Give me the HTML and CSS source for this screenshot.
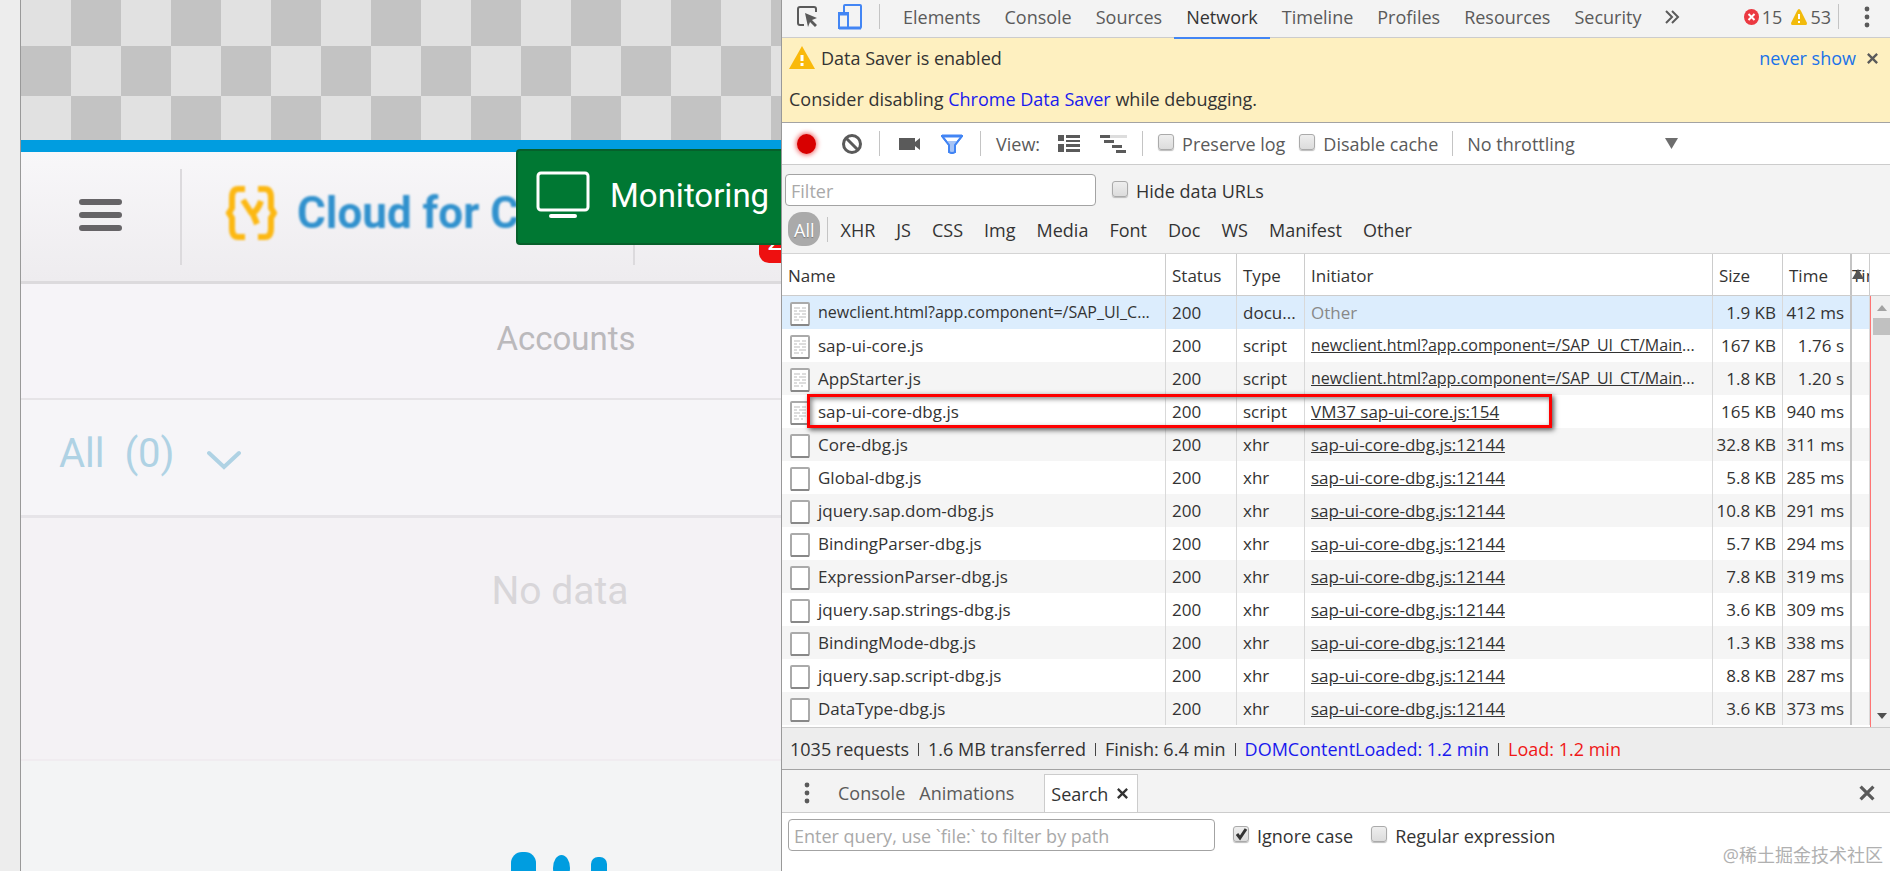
FILE: index.html
```html
<!DOCTYPE html>
<html lang="en">
<head>
    <meta charset="UTF-8">
    <meta name="viewport" content="width=device-width, initial-scale=1.0">
    <title>Cloud for Customer - Network</title>
    <link rel="stylesheet" href="styles.css">
</head>
<body>
    <svg class="sprite" aria-hidden="true">
        <symbol id="file-text" viewBox="0 0 20 24">
            <rect x="1" y="1" width="18" height="22" rx="1" fill="#fff" stroke="#aaa" stroke-width="2"/>
            <path d="M1 23h18" stroke="#888" stroke-width="2"/>
            <path d="M4 6h6m2 0h4M4 9h3m2 0h7M4 12h6m2 0h4M4 15h3m2 0h7M4 18h5m2 0h2" stroke="#ddd" stroke-width="2"/>
        </symbol>
        <symbol id="file-blank" viewBox="0 0 20 24">
            <rect x="1" y="1" width="18" height="22" rx="1" fill="#fff" stroke="#aaa" stroke-width="2"/>
            <path d="M1 23h18" stroke="#888" stroke-width="2"/>
        </symbol>
        <symbol id="cross" viewBox="0 0 14 14">
            <path d="M2 2l10 10M12 2L2 12" stroke="currentColor" stroke-width="2.500"/>
        </symbol>
        <symbol id="dots" viewBox="0 0 6 22">
            <circle cx="3" cy="3" r="2.4" fill="currentColor"/>
            <circle cx="3" cy="11" r="2.4" fill="currentColor"/>
            <circle cx="3" cy="19" r="2.4" fill="currentColor"/>
        </symbol>
    </svg>

    <div class="container">
        <!-- Device preview -->
        <div class="preview">
            <div class="device">
                <div class="checker"></div>
                <header class="app-header">
                    <button class="menu-btn" aria-label="Menu"><span></span><span></span><span></span></button>
                    <div class="app-sep"></div>
                    <svg class="logo" width="52" height="54" viewBox="0 0 52 54" fill="none" stroke="#fcb813">
                        <path d="M20 3h-7Q7 3 7 12v10l-3 5 3 5v10q0 9 6 9h7M33 3h7q6 0 6 9v10l3 5-3 5v10q0 9-6 9h-7" stroke-width="6"/>
                        <path d="M18 14l9 14M36 15q-3 9-9 13M27 26l5 12" stroke-width="6"/>
                    </svg>
                    <span class="app-title">Cloud for C</span>
                    <div class="app-sep second"></div>
                    <span class="badge">2</span>
                    <div class="monitoring">
                        <svg width="54" height="48" viewBox="0 0 54 48" fill="none" stroke="#fff">
                            <rect x="2" y="2" width="50" height="37" rx="3" stroke-width="3"/>
                            <path d="M15 45h24" stroke-width="4" stroke-linecap="round"/>
                        </svg>
                        <span>Monitoring</span>
                    </div>
                </header>
                <div class="accounts">Accounts</div>
                <button class="filter-all">
                    <span>All&nbsp; (0)</span>
                    <svg width="34" height="20" viewBox="0 0 34 20" fill="none" stroke="currentColor" stroke-width="4" stroke-linecap="round">
                        <path d="M2 3l15 14L32 3"/>
                    </svg>
                </button>
                <div class="no-data">No data</div>
                <div class="loading">
                    <i class="dot big"></i><i class="dot mid"></i><i class="dot"></i>
                </div>
            </div>
        </div>

        <!-- DevTools -->
        <div class="devtools">
            <nav class="tabs">
                <button class="icon-btn inspect" aria-label="Inspect">
                    <svg width="22" height="22" viewBox="0 0 22 22">
                        <path d="M7 19H3q-2 0-2-2V3q0-2 2-2h14q2 0 2 2v3" fill="none" stroke="#5a5a5a" stroke-width="2"/>
                        <path d="M8 7l12 5-5 2 5 5-2 2-5-5-2 5z" fill="#5a5a5a"/>
                    </svg>
                </button>
                <button class="icon-btn device-btn" aria-label="Toggle device toolbar">
                    <svg width="24" height="26" viewBox="0 0 24 26" fill="#f3f3f3" stroke="#4285f4" stroke-width="2">
                        <rect x="6" y="1" width="17" height="23" rx="1"/>
                        <path d="M1 9h9v15H1z"/>
                        <path d="M1 10h9" stroke-width="3"/>
                        <path d="M1 24h22" stroke-width="3"/>
                    </svg>
                </button>
                <div class="sep"></div>
                <div class="tab-list">
                    <button>Elements</button>
                    <button>Console</button>
                    <button>Sources</button>
                    <button class="active">Network</button>
                    <button>Timeline</button>
                    <button>Profiles</button>
                    <button>Resources</button>
                    <button>Security</button>
                    <button class="more" aria-label="More tabs">
                        <svg width="15" height="14" viewBox="0 0 15 14" fill="none" stroke="#5a5a5a" stroke-width="2">
                            <path d="M1 1l6 6-6 6M7 1l6 6-6 6"/>
                        </svg>
                    </button>
                </div>
                <div class="counts">
                    <svg width="15" height="16" viewBox="0 0 15 16">
                        <ellipse cx="7.500" cy="8" rx="7.500" ry="8" fill="#eb3941"/>
                        <path d="M4.500 5l6 6M10.500 5l-6 6" stroke="#fff" stroke-width="2"/>
                    </svg>
                    <span>15</span>
                    <svg class="warn" width="16" height="16" viewBox="0 0 16 16">
                        <path d="M8 0q1 0 2 2l6 12q0 2-1 2H1q-1 0-1-2L6 2q1-2 2-2z" fill="#f2bb0c"/>
                        <path d="M8 5v5m0 2v2" stroke="#fff" stroke-width="2"/>
                    </svg>
                    <span>53</span>
                </div>
                <div class="sep"></div>
                <button class="icon-btn main-menu" aria-label="Customize"><svg width="6" height="22"><use href="#dots"/></svg></button>
            </nav>

            <div class="infobar">
                <div class="info-row">
                    <svg width="26" height="24" viewBox="0 0 26 24">
                        <path d="M13 0l13 23H0z" fill="#f9b90b"/>
                        <path d="M13 9v6m0 2v3" stroke="#fff" stroke-width="3"/>
                    </svg>
                    <span>Data Saver is enabled</span>
                    <a class="never" href="#">never show</a>
                    <button class="icon-btn" aria-label="Close"><svg width="13" height="13"><use href="#cross"/></svg></button>
                </div>
                <div class="info-detail">Consider disabling <a href="#">Chrome Data Saver</a> while debugging.</div>
            </div>

            <div class="toolbar">
                <button class="icon-btn record" aria-label="Record"></button>
                <button class="icon-btn clear" aria-label="Clear">
                    <svg width="22" height="22" viewBox="0 0 22 22" fill="none" stroke="#5a5a5a" stroke-width="3">
                        <circle cx="11" cy="11" r="8.500"/><path d="M5 5l12 12"/>
                    </svg>
                </button>
                <div class="sep"></div>
                <button class="icon-btn camera" aria-label="Capture screenshots">
                    <svg width="22" height="14" viewBox="0 0 22 14" fill="#5a5a5a"><path d="M0 1h16v4l5-4v12l-5-4v4H0z"/></svg>
                </button>
                <button class="icon-btn funnel" aria-label="Filter">
                    <svg width="22" height="20" viewBox="0 0 22 20" stroke="#4285f4" stroke-width="2">
                        <path d="M1 2h20l-7 9v7q-3 2-6 0v-7z" fill="#fff"/>
                        <path d="M5 7h12l-3 4v7q-3 2-6 0v-7z" fill="#a6c4f7" stroke="none"/>
                        <path d="M1 2h20l-7 9v7q-3 2-6 0v-7z" fill="none"/>
                        <path d="M1 2h20" stroke-width="3"/>
                    </svg>
                </button>
                <div class="sep"></div>
                <span class="view">View:</span>
                <button class="icon-btn list-view" aria-label="Use large rows">
                    <svg width="22" height="17" viewBox="0 0 22 17" fill="#5a5a5a">
                        <path d="M0 0h6v6H0zM0 9h6v8H0zM8 0h14v3H8zM8 5h14v2H8zM8 9h14v3H8zM8 14h14v3H8z"/>
                    </svg>
                </button>
                <button class="icon-btn overview" aria-label="Show overview">
                    <svg width="27" height="18" viewBox="0 0 27 18" fill="#5a5a5a">
                        <path d="M10 0h17v3H10z" fill="#ddd"/>
                        <path d="M0 0h10v3H0zM4 5h10v3H4zM12 10h10v3H12zM16 15h10v3H16z"/>
                    </svg>
                </button>
                <div class="sep"></div>
                <label class="check"><input type="checkbox">Preserve log</label>
                <label class="check"><input type="checkbox">Disable cache</label>
                <div class="sep"></div>
                <div class="throttle">
                    <select aria-label="Throttling"><option>No throttling</option></select>
                    <svg width="13" height="11" viewBox="0 0 13 11"><path d="M0 0h13L6.500 11z" fill="#6e6e6e"/></svg>
                </div>
            </div>

            <div class="filters">
                <div class="filter-row">
                    <input class="text-input" type="text" placeholder="Filter" aria-label="Filter">
                    <label class="check"><input type="checkbox">Hide data URLs</label>
                </div>
                <div class="types">
                    <button class="all">All</button>
                    <div class="sep"></div>
                    <button>XHR</button>
                    <button>JS</button>
                    <button>CSS</button>
                    <button>Img</button>
                    <button>Media</button>
                    <button>Font</button>
                    <button>Doc</button>
                    <button>WS</button>
                    <button>Manifest</button>
                    <button>Other</button>
                </div>
            </div>

            <div class="requests">
                <table>
                    <colgroup>
                        <col class="c-name"><col class="c-status"><col class="c-type"><col><col class="c-size"><col class="c-time"><col class="c-line"><col class="c-scroll">
                    </colgroup>
                    <thead>
                        <tr><th>Name</th><th>Status</th><th>Type</th><th>Initiator</th><th>Size</th><th>Time</th><th class="line">Tim<svg class="sort" width="12" height="10" viewBox="0 0 12 10"><path d="M6 0l6 10H0z" fill="#555"/></svg></th><th class="end"></th></tr>
                    </thead>
                    <tbody>
                        <tr class="selected"><td class="long"><svg class="file"><use href="#file-text"/></svg>newclient.html?app.component=/SAP_UI_C...</td><td>200</td><td>docu...</td><td class="other">Other</td><td>1.9 KB</td><td>412 ms</td><td></td><td class="end"></td></tr>
                        <tr><td><svg class="file"><use href="#file-text"/></svg>sap-ui-core.js</td><td>200</td><td>script</td><td class="long"><a href="#">newclient.html?app.component=/SAP_UI_CT/Main</a>...</td><td>167 KB</td><td>1.76 s</td><td></td><td class="end"></td></tr>
                        <tr><td><svg class="file"><use href="#file-text"/></svg>AppStarter.js</td><td>200</td><td>script</td><td class="long"><a href="#">newclient.html?app.component=/SAP_UI_CT/Main</a>...</td><td>1.8 KB</td><td>1.20 s</td><td></td><td class="end"></td></tr>
                        <tr><td><svg class="file"><use href="#file-text"/></svg>sap-ui-core-dbg.js</td><td>200</td><td>script</td><td><a href="#">VM37 sap-ui-core.js:154</a></td><td>165 KB</td><td>940 ms</td><td></td><td class="end"></td></tr>
                        <tr><td><svg class="file"><use href="#file-blank"/></svg>Core-dbg.js</td><td>200</td><td>xhr</td><td><a href="#">sap-ui-core-dbg.js:12144</a></td><td>32.8 KB</td><td>311 ms</td><td></td><td class="end"></td></tr>
                        <tr><td><svg class="file"><use href="#file-blank"/></svg>Global-dbg.js</td><td>200</td><td>xhr</td><td><a href="#">sap-ui-core-dbg.js:12144</a></td><td>5.8 KB</td><td>285 ms</td><td></td><td class="end"></td></tr>
                        <tr><td><svg class="file"><use href="#file-blank"/></svg>jquery.sap.dom-dbg.js</td><td>200</td><td>xhr</td><td><a href="#">sap-ui-core-dbg.js:12144</a></td><td>10.8 KB</td><td>291 ms</td><td></td><td class="end"></td></tr>
                        <tr><td><svg class="file"><use href="#file-blank"/></svg>BindingParser-dbg.js</td><td>200</td><td>xhr</td><td><a href="#">sap-ui-core-dbg.js:12144</a></td><td>5.7 KB</td><td>294 ms</td><td></td><td class="end"></td></tr>
                        <tr><td><svg class="file"><use href="#file-blank"/></svg>ExpressionParser-dbg.js</td><td>200</td><td>xhr</td><td><a href="#">sap-ui-core-dbg.js:12144</a></td><td>7.8 KB</td><td>319 ms</td><td></td><td class="end"></td></tr>
                        <tr><td><svg class="file"><use href="#file-blank"/></svg>jquery.sap.strings-dbg.js</td><td>200</td><td>xhr</td><td><a href="#">sap-ui-core-dbg.js:12144</a></td><td>3.6 KB</td><td>309 ms</td><td></td><td class="end"></td></tr>
                        <tr><td><svg class="file"><use href="#file-blank"/></svg>BindingMode-dbg.js</td><td>200</td><td>xhr</td><td><a href="#">sap-ui-core-dbg.js:12144</a></td><td>1.3 KB</td><td>338 ms</td><td></td><td class="end"></td></tr>
                        <tr><td><svg class="file"><use href="#file-blank"/></svg>jquery.sap.script-dbg.js</td><td>200</td><td>xhr</td><td><a href="#">sap-ui-core-dbg.js:12144</a></td><td>8.8 KB</td><td>287 ms</td><td></td><td class="end"></td></tr>
                        <tr><td><svg class="file"><use href="#file-blank"/></svg>DataType-dbg.js</td><td>200</td><td>xhr</td><td><a href="#">sap-ui-core-dbg.js:12144</a></td><td>3.6 KB</td><td>373 ms</td><td></td><td class="end"></td></tr>
                    </tbody>
                </table>
                <div class="highlight"></div>
                <div class="scrollbar">
                    <svg width="10" height="6" viewBox="0 0 10 6"><path d="M5 0l5 6H0z" fill="#a3a3a3"/></svg>
                    <div class="thumb"></div>
                    <svg class="down" width="10" height="6" viewBox="0 0 10 6"><path d="M0 0h10L5 6z" fill="#505050"/></svg>
                </div>
            </div>

            <div class="summary">
                <span>1035 requests</span><i></i><span>1.6 MB transferred</span><i></i><span>Finish: 6.4 min</span><i></i><span class="dom">DOMContentLoaded: 1.2 min</span><i></i><span class="load">Load: 1.2 min</span>
            </div>

            <div class="drawer-tabs">
                <button class="icon-btn drawer-menu" aria-label="More tools"><svg width="6" height="22"><use href="#dots"/></svg></button>
                <button>Console</button>
                <button>Animations</button>
                <button class="current">Search <svg width="13" height="13"><use href="#cross"/></svg></button>
                <button class="icon-btn drawer-close" aria-label="Close drawer"><svg width="18" height="18"><use href="#cross"/></svg></button>
            </div>
            <div class="search">
                <input class="text-input" type="text" placeholder="Enter query, use `file:` to filter by path" aria-label="Search query">
                <label class="check"><input type="checkbox" checked>Ignore case</label>
                <label class="check"><input type="checkbox">Regular expression</label>
            </div>
            <div class="watermark">@稀土掘金技术社区</div>
        </div>
    </div>
</body>
</html>
```
FILE: styles.css
```css
* {
    box-sizing: border-box;
}
body {
    margin: 0;
    font-family: "Open Sans", "Noto Sans CJK SC", sans-serif;
    font-size: 18px;
    color: #333;
}
button, input, select {
    font: inherit;
    color: inherit;
    margin: 0;
    padding: 0;
    border: none;
    background: none;
}
a {
    text-decoration: none;
}
svg {
    display: block;
    flex: none;
}
.sprite {
    position: absolute;
    width: 0;
    height: 0;
}
.container {
    display: grid;
    grid-template-columns: 781fr 1109fr;
    height: 100vh;
    overflow: hidden;
}

/* Device preview */
.preview {
    padding-left: 20px;
    background: #ededed;
    min-width: 0;
    overflow: hidden;
}
.device {
    display: flex;
    flex-direction: column;
    height: 100%;
    border-left: 1px solid #999;
    background: #f3f4f5;
    font-family: Roboto, sans-serif;
}
.checker {
    flex: none;
    height: 140px;
    background: conic-gradient(#c3c3c3 25%, #e1e1e1 0 50%, #c3c3c3 0 75%, #e1e1e1 0);
    background-size: 100px 100px;
    background-position: 0 -4px;
}
.app-header {
    flex: none;
    position: relative;
    display: flex;
    align-items: center;
    height: 144px;
    padding-left: 58px;
    border-top: 12px solid #009de0;
    border-bottom: 3px solid #dcdadd;
    background: linear-gradient(#f8f7f9, #eeecef);
}
.menu-btn {
    display: flex;
    flex-direction: column;
    gap: 7px;
    width: 43px;
    margin-bottom: 4px;
}
.menu-btn span {
    height: 6px;
    border-radius: 3px;
    background: #666467;
}
.app-sep {
    width: 2px;
    height: 96px;
    margin: 0 43px 0 58px;
    background: #dcdadd;
}
.app-sep.second {
    margin: 0;
    position: absolute;
    left: 612px;
}
.logo {
    margin-bottom: 8px;
    filter: blur(1px);
}
.app-title {
    margin: 0 0 8px 20px;
    font-size: 44px;
    font-weight: 700;
    color: #3191cd;
    filter: blur(1px);
    white-space: nowrap;
}
.badge {
    position: absolute;
    left: 738px;
    top: 63px;
    right: 0;
    height: 48px;
    padding-left: 8px;
    border-radius: 10px 0 0 10px;
    background: #ee1010;
    color: #fff;
    font-size: 28px;
    line-height: 52px;
    overflow: hidden;
}
.monitoring {
    position: absolute;
    top: -3px;
    left: 495px;
    right: 0;
    height: 96px;
    display: flex;
    align-items: center;
    gap: 20px;
    padding: 0 0 4px 18px;
    border: 2px solid #07602b;
    border-right: none;
    border-radius: 4px 0 0 4px;
    background: #007833;
    color: #fff;
    font-size: 33px;
}
.accounts {
    flex: none;
    height: 116px;
    padding-left: 330px;
    border-bottom: 2px solid #e6e4e7;
    background: #f6f4f8;
    color: #bbb9bc;
    font-size: 33px;
    line-height: 110px;
    text-align: center;
}
.filter-all {
    flex: none;
    display: flex;
    align-items: center;
    gap: 32px;
    height: 118px;
    padding: 0 0 8px 38px;
    border-bottom: 3px solid #e6e4e8;
    background: #f6f5f8;
    color: #afd2e4;
    font-size: 40px;
}
.filter-all svg {
    margin-top: 12px;
}
.no-data {
    flex: none;
    height: 243px;
    padding: 49px 0 0 318px;
    border-bottom: 2px solid #f0ecf0;
    background: #f4f2f5;
    color: #d8d6d9;
    font-size: 39px;
    line-height: 48px;
    text-align: center;
}
.loading {
    display: flex;
    align-items: center;
    gap: 17px;
    padding: 91px 0 0 490px;
}
.dot {
    width: 16px;
    height: 22px;
    margin-left: 4px;
    border-radius: 7px;
    background: #009de0;
}
.dot.mid {
    width: 17px;
    height: 26px;
    margin: 0;
    border-radius: 50%;
}
.dot.big {
    width: 25px;
    height: 32px;
    margin: 0;
    border-radius: 11px;
}

/* DevTools */
.devtools {
    position: relative;
    display: flex;
    flex-direction: column;
    min-width: 0;
    border-left: 1px solid #999;
    background: #fff;
}
.devtools > * {
    flex: none;
}
.icon-btn {
    display: flex;
    align-items: center;
    justify-content: center;
    color: #5a5a5a;
}
.sep {
    width: 1px;
    height: 25px;
    background: #c4c4c4;
}
.tabs {
    display: flex;
    align-items: center;
    height: 38px;
    padding: 0 20px 4px 15px;
    border-bottom: 1px solid #ccc;
    background: #f3f3f3;
    color: #5a5a5a;
}
.device-btn {
    margin: 0 17px 0 19px;
}
.tab-list {
    display: flex;
    align-self: flex-start;
    flex: 1;
    min-width: 0;
    margin-left: 11px;
}
.tab-list button {
    height: 39px;
    padding: 0 12px 4px;
    line-height: 32px;
    border-bottom: 2px solid transparent;
    position: relative;
}
.tab-list .active {
    color: #333;
    border-bottom-color: #4285f4;
}
.counts {
    display: flex;
    align-items: center;
    gap: 3px;
    margin-right: 7px;
}
.counts .warn {
    margin-left: 6px;
}
.main-menu {
    margin-left: 25px;
}
.infobar {
    height: 85px;
    padding: 3px 11px 0 7px;
    border-bottom: 1px solid #a3a3a3;
    background: #fef0c0;
}
.info-row {
    display: flex;
    align-items: center;
    gap: 6px;
    height: 34px;
}
.never {
    margin: 0 4px 0 auto;
    color: #1a73e8;
}
.info-detail {
    margin-top: 6px;
    line-height: 36px;
}
.info-detail a {
    color: #1a1aee;
}
.toolbar {
    display: flex;
    align-items: center;
    height: 42px;
    padding-left: 15px;
    border-bottom: 1px solid #ccc;
    color: #5a5a5a;
}
.record {
    width: 19px;
    height: 20px;
    border-radius: 50%;
    background: #d80000;
    box-shadow: 0 0 5px 1px #ee6666;
}
.clear {
    margin: 0 16px 0 25px;
}
.camera {
    margin: 0 20px 0 19px;
}
.funnel {
    margin-right: 17px;
}
.view {
    margin: 0 18px 0 15px;
}
.overview {
    margin: 0 15px 0 20px;
}
.check {
    display: flex;
    align-items: center;
    gap: 8px;
    white-space: nowrap;
}
.check input {
    appearance: none;
    width: 16px;
    height: 16px;
    margin-bottom: 4px;
    border: 1px solid #aaa;
    border-radius: 3px;
    background: linear-gradient(#eee, #dcdcdc);
    box-shadow: 0 1px 1px #bbb;
}
.check input:checked {
    background: url("data:image/svg+xml,%3Csvg xmlns='http://www.w3.org/2000/svg' viewBox='0 0 14 14'%3E%3Cpath d='M3 7l3 4 6-9' fill='none' stroke='%23333' stroke-width='3'/%3E%3C/svg%3E"), linear-gradient(#eee, #dcdcdc);
}
.toolbar .check {
    margin: 0 14px 0 0;
}
.sep + .check {
    padding-left: 15px;
}
.throttle {
    display: flex;
    align-items: center;
    justify-content: space-between;
    width: 225px;
    padding-left: 14px;
}
.throttle select {
    appearance: none;
}
.filters {
    height: 89px;
    padding: 9px 3px 0;
    border-bottom: 1px solid #d4d4d4;
    background: #f3f3f3;
}
.filter-row {
    display: flex;
    gap: 16px;
}
.filter-row .check {
    padding-top: 2px;
}
.text-input {
    height: 32px;
    padding: 2px 5px 0;
    border: 1px solid #a3a3a3;
    border-radius: 4px;
    background: #fff;
}
.text-input::placeholder {
    color: #a9a9a9;
}
.filter-row .text-input {
    width: 311px;
}
.types {
    display: flex;
    align-items: center;
    gap: 21px;
    height: 34px;
    margin: 6px 0 0 3px;
}
.types button {
    padding-top: 2px;
}
.types .all {
    height: 34px;
    padding: 2px 6px 0;
    margin-right: -14px;
    border-radius: 14px;
    background: #aaa;
    color: #fff;
    text-shadow: 0 1px 1px #777;
}
.types .sep {
    margin-right: -9px;
}

/* Request table */
.requests {
    position: relative;
    flex: 1 1 0;
    min-height: 0;
    overflow: hidden;
    border-bottom: 1px solid #ccc;
}
table {
    width: 100%;
    table-layout: fixed;
    border-collapse: separate;
    border-spacing: 0;
    font-size: 17px;
}
.c-name { width: 384px; }
.c-status { width: 71px; }
.c-type { width: 68px; }
.c-size { width: 70px; }
.c-time { width: 69px; }
.c-line { width: 18px; }
.c-scroll { width: 20px; }
th, td {
    height: 33px;
    padding: 0 6px;
    border-right: 1px solid #d9d9d9;
    line-height: 33px;
    text-align: left;
    white-space: nowrap;
    overflow: hidden;
    text-overflow: ellipsis;
}
th {
    height: 42px;
    padding-top: 2px;
    border-right-color: #ccc;
    border-bottom: 1px solid #ccc;
    font-weight: 400;
}
td:nth-child(5), td:nth-child(6) {
    padding: 0 6px 0 0;
    text-align: right;
}
th:nth-child(6), td:nth-child(6) {
    border-right: 2px solid #c4c4c4;
}
/* truncated urls */
.long {
    padding-right: 0;
    font-size: 16px;
}
th.line {
    position: relative;
    padding: 2px 0 0;
    text-overflow: clip;
}
.sort {
    position: absolute;
    left: 0;
    top: 15px;
}
tbody tr:nth-child(odd) {
    background: #f5f5f5;
}
tbody .selected:nth-child(odd) {
    background: #dcedfd;
}
.other {
    color: #888;
}
td a {
    color: #333;
    text-decoration: underline;
}
.file {
    display: inline-block;
    width: 20px;
    height: 24px;
    margin: 0 8px 0 2px;
    vertical-align: middle;
}
.end {
    border-right: none;
}
.highlight {
    position: absolute;
    left: 25px;
    top: 140px;
    width: 745px;
    height: 34px;
    border: 3px solid #fe0000;
    box-shadow: 2px 2px 5px #555, inset 2px 2px 5px #888;
}
.scrollbar {
    position: absolute;
    top: 42px;
    right: 0;
    bottom: 0;
    width: 20px;
    display: flex;
    flex-direction: column;
    align-items: center;
    padding: 9px 0 8px 2px;
    border-left: 1px solid #ff7474;
    background: #f0f0f0;
}
.thumb {
    width: 17px;
    height: 17px;
    margin-top: 7px;
    background: #c1c1c1;
}
.down {
    margin-top: auto;
}

.summary {
    display: flex;
    align-items: center;
    gap: 9px;
    height: 42px;
    padding: 1px 0 0 8px;
    border-bottom: 1px solid #a3a3a3;
    background: #ededed;
}
.summary i {
    width: 1px;
    height: 13px;
    background: #444;
}
.dom {
    color: #1a1aee;
}
.load {
    color: #f01818;
}
.drawer-tabs {
    display: flex;
    align-items: center;
    height: 43px;
    padding: 0 14px 0 22px;
    border-bottom: 1px solid #ccc;
    background: #f3f3f3;
    color: #5a5a5a;
}
.drawer-tabs button {
    margin-right: 14px;
    padding-top: 4px;
}
.drawer-tabs .drawer-menu {
    margin-right: 28px;
}
.drawer-tabs .current {
    display: flex;
    align-items: center;
    gap: 8px;
    align-self: flex-end;
    height: 38px;
    margin-left: 16px;
    padding: 0 8px 0 6px;
    border: 1px solid #ccc;
    border-bottom: none;
    background: #fff;
    color: #333;
}
.drawer-tabs .drawer-close {
    margin: 0 0 0 auto;
}
.search {
    display: flex;
    align-items: flex-start;
    gap: 18px;
    height: 58px;
    padding: 6px 6px 0;
}
.search .text-input {
    width: 427px;
}
.search .check {
    height: 32px;
    padding-top: 2px;
}
.watermark {
    position: absolute;
    right: 7px;
    bottom: 3px;
    color: #b0b0b0;
    font-size: 18px;
    line-height: 26px;
}
```
